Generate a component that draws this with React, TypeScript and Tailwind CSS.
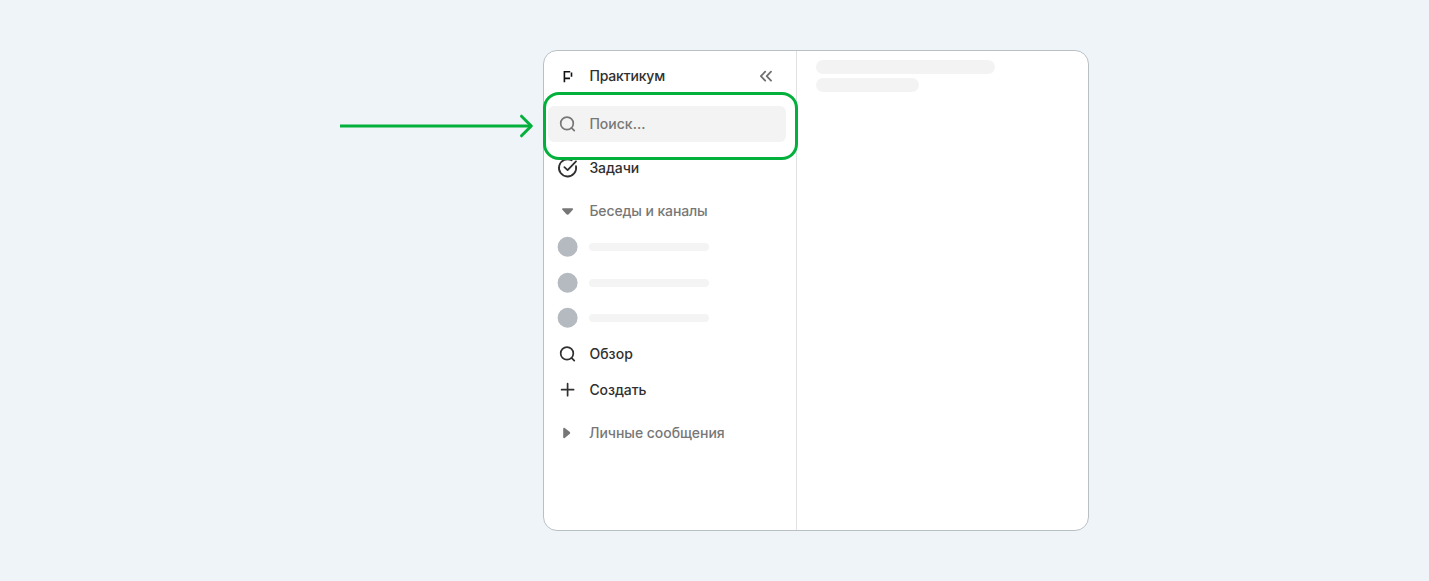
import type { ReactNode } from "react";

const stroke = { fill: "none", stroke: "currentColor", strokeLinecap: "round", strokeLinejoin: "round" } as const;

function Search({ className }: { className: string }) {
  return (
    <svg viewBox="0 0 20 20" className={`size-5 ${className}`} {...stroke} strokeWidth="1.7">
      <circle cx="9" cy="9.4" r="6.3" />
      <path d="M13.7 14.1 16.3 16.7" />
    </svg>
  );
}

function Row({ icon, children, className }: { icon: ReactNode; children: ReactNode; className: string }) {
  return (
    <div className={`flex shrink-0 items-center gap-[11px] pl-[10px] ${className}`}>
      <span className="flex size-5 shrink-0 items-center justify-center">{icon}</span>
      {children}
    </div>
  );
}

export default function App() {
  return (
    <main className="flex h-[581px] w-full items-start overflow-hidden bg-[#eef4f7] pl-[340px] pt-[50px] font-['Inter','Liberation_Sans',sans-serif] text-[14px] font-medium text-[#303030]">
      <svg className="mr-[9px] mt-[62px] h-[28px] w-[194px] shrink-0" viewBox="0 0 194 28" fill="none" stroke="#04b03c" strokeWidth="3">
        <path d="M0 14H191" />
        <path d="M181.5 4.2 191.3 14l-9.8 9.8" strokeLinecap="round" strokeLinejoin="round" />
      </svg>
      <div className="flex h-[481px] w-[546px] shrink-0 rounded-[14px] border border-[#b9c0c4] bg-white">
        <nav className="flex w-[253px] flex-col border-r border-[#dfe1e3] pl-1 pr-[10px] pt-[7px]">
          <Row
            className="h-9"
            icon={
              <svg viewBox="0 0 20 20" className="size-5" fill="none" stroke="#111" strokeWidth="1.6">
                <path d="M6.4 16.3V5.8H12.2M6.4 12.4H12M13.5 6.6V10.8" />
              </svg>
            }
          >
            <span className="pb-px pl-[0.4px] tracking-[-0.16px]">Практикум</span>
            <svg viewBox="0 0 20 20" className="ml-auto mr-[10px] size-5 text-[#707070]" {...stroke} strokeWidth="1.8">
              <path d="M9.2 5.7 4.9 10.2l4.3 4.5M15 5.7 10.7 10.2l4.3 4.5" />
            </svg>
          </Row>
          <div className="relative mt-3">
            <Row className="h-9 rounded-md bg-[#f3f3f3] text-[#777]" icon={<Search className="text-[#777]" />}>
              <span className="pb-[2px] pl-[0.4px] tracking-[0.02px]">Поиск...</span>
            </Row>
            <div className="absolute -bottom-[17.6px] -left-[5px] -right-[12px] -top-[14px] rounded-[16px] border-[3px] border-[#04b03c]" />
          </div>
          <Row
            className="mt-2 h-9"
            icon={
              <svg viewBox="0 0 20 20" className="size-5 overflow-visible" {...stroke} strokeWidth="1.8">
                <path d="M18 8.2A8.6 8.6 0 1 1 13.6 2.3" />
                <path d="M6.4 9.2 9.6 12.1 18 3.3" />
              </svg>
            }
          >
            <span className="pb-[2px] pl-[0.4px] tracking-[-0.08px]">Задачи</span>
          </Row>
          <Row
            className="mt-2 h-[35px] text-[#777]"
            icon={
              <svg viewBox="0 0 20 20" className="size-5" fill="currentColor">
                <path d="M4.9 6.2h9.4c.8 0 1 .9.5 1.5l-3.8 4.4c-.8.9-2 .9-2.8 0L4.4 7.7c-.5-.6-.3-1.5.5-1.5Z" />
              </svg>
            }
          >
            <span className="pb-[2px] pl-[0.4px] tracking-[-0.12px]">Беседы и каналы</span>
          </Row>
          {[0, 1, 2].map((i) => (
            <Row
              key={i}
              className="h-[35.7px]"
              icon={
                <svg viewBox="0 0 20 20" className="size-5 overflow-visible">
                  <circle cx="9.6" cy="9.8" r="10" fill="#b4babf" />
                </svg>
              }
            >
              <span className="h-2 w-[120px] rounded-full bg-[#f4f4f4]" />
            </Row>
          ))}
          <Row className="h-[35.7px]" icon={<Search className="text-[#303030]" />}>
            <span className="pl-[0.4px] tracking-[0.06px]">Обзор</span>
          </Row>
          <Row
            className="h-[35.7px]"
            icon={
              <svg viewBox="0 0 20 20" className="size-5" {...stroke} strokeWidth="1.7">
                <path d="M9.6 3.7v12M3.6 9.7h12" />
              </svg>
            }
          >
            <span className="pl-[0.4px] tracking-[-0.08px]">Создать</span>
          </Row>
          <Row
            className="mt-2 h-[35.7px] text-[#777]"
            icon={
              <svg viewBox="0 0 20 20" className="size-5" fill="currentColor">
                <path d="M5.2 5.6c0-.8.9-1.1 1.5-.6l4.9 3.8c.8.7.8 1.5 0 2.2L6.7 15c-.6.5-1.5.2-1.5-.6Z" />
              </svg>
            }
          >
            <span className="pb-[2px] tracking-[-0.04px]">Личные сообщения</span>
          </Row>
        </nav>
        <section className="flex flex-1 flex-col gap-1 pl-[19px] pt-[9px]">
          <div className="h-[14px] w-[179px] rounded-full bg-[#f3f3f3]" />
          <div className="h-[14px] w-[103px] rounded-full bg-[#f3f3f3]" />
        </section>
      </div>
    </main>
  );
}
